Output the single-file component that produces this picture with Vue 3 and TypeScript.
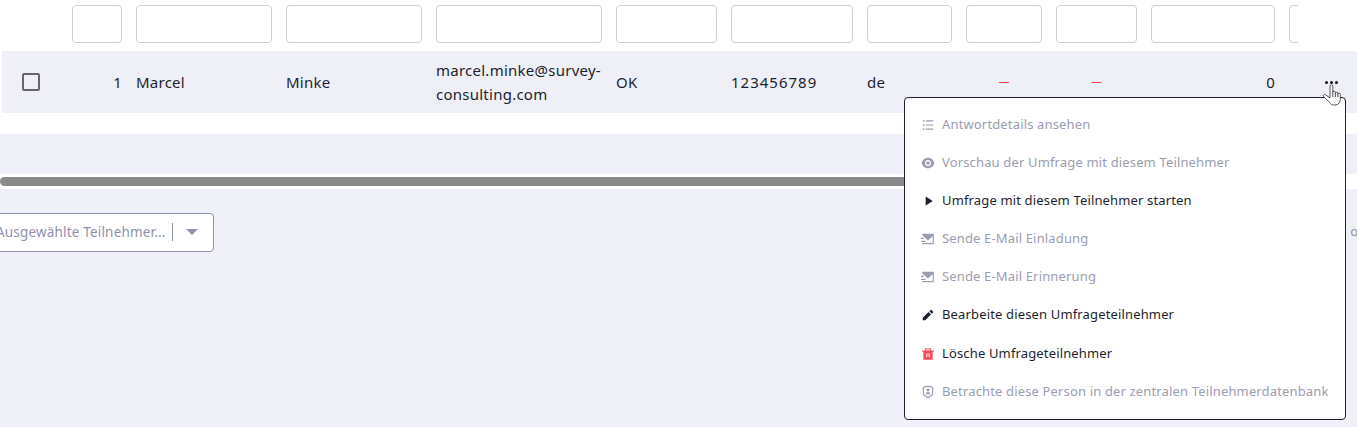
<script setup lang="ts">
interface MenuItem {
  label: string
  path: string
  disabled: boolean
  danger?: boolean
}

const filterCount = 11

const menuItems: MenuItem[] = [
  { label: 'Antwortdetails ansehen', disabled: true, path: 'M8 4h13v2H8V4zM4.5 6.5a1.5 1.5 0 1 1 0-3 1.5 1.5 0 0 1 0 3zm0 7a1.5 1.5 0 1 1 0-3 1.5 1.5 0 0 1 0 3zm0 6.9a1.5 1.5 0 1 1 0-3 1.5 1.5 0 0 1 0 3zM8 11h13v2H8v-2zm0 7h13v2H8v-2z' },
  { label: 'Vorschau der Umfrage mit diesem Teilnehmer', disabled: true, path: 'M1.181 12C2.121 6.88 6.608 3 12 3c5.392 0 9.878 3.88 10.819 9-.94 5.12-5.427 9-10.819 9-5.392 0-9.878-3.88-10.819-9zM12 17a5 5 0 1 0 0-10 5 5 0 0 0 0 10zm0-2a3 3 0 1 1 0-6 3 3 0 0 1 0 6z' },
  { label: 'Umfrage mit diesem Teilnehmer starten', disabled: false, path: 'M19.376 12.416L8.777 19.482A.5.5 0 0 1 8 19.066V4.934a.5.5 0 0 1 .777-.416l10.599 7.066a.5.5 0 0 1 0 .832z' },
  { label: 'Sende E-Mail Einladung', disabled: true, path: 'M2 5.5V3.993A1 1 0 0 1 2.992 3h18.016c.548 0 .992.445.992.993v16.014a1 1 0 0 1-.992.993H2.992A.993.993 0 0 1 2 20.007V19h18V7.3l-8 7.2-10-9zM0 10h5v2H0v-2zm0 5h8v2H0v-2z' },
  { label: 'Sende E-Mail Erinnerung', disabled: true, path: 'M2 5.5V3.993A1 1 0 0 1 2.992 3h18.016c.548 0 .992.445.992.993v16.014a1 1 0 0 1-.992.993H2.992A.993.993 0 0 1 2 20.007V19h18V7.3l-8 7.2-10-9zM0 10h5v2H0v-2zm0 5h8v2H0v-2z' },
  { label: 'Bearbeite diesen Umfrageteilnehmer', disabled: false, path: 'M12.9 6.858l4.242 4.243L7.242 21H3v-4.243l9.9-9.9zm1.414-1.414l2.121-2.122a1 1 0 0 1 1.414 0l2.829 2.829a1 1 0 0 1 0 1.414l-2.122 2.121-4.242-4.242z' },
  { label: 'Lösche Umfrageteilnehmer', disabled: false, danger: true, path: 'M17 6h5v2h-2v13a1 1 0 0 1-1 1H5a1 1 0 0 1-1-1V8H2V6h5V3a1 1 0 0 1 1-1h8a1 1 0 0 1 1 1v3zm-8 5v6h2v-6H9zm4 0v6h2v-6h-2zM9 4v2h6V4H9z' },
  { label: 'Betrachte diese Person in der zentralen Teilnehmerdatenbank', disabled: true, path: 'M3.783 2.826L12 1l8.217 1.826a1 1 0 0 1 .783.976v9.987a6 6 0 0 1-2.672 4.992L12 23l-6.328-4.219A6 6 0 0 1 3 13.79V3.802a1 1 0 0 1 .783-.976zM5 4.604v9.185a4 4 0 0 0 1.781 3.328L12 20.597l5.219-3.48A4 4 0 0 0 19 13.79V4.604L12 3.05 5 4.604zM12 11a2.5 2.5 0 1 1 0-5 2.5 2.5 0 0 1 0 5zm-4.473 5a4.5 4.5 0 0 1 8.946 0H7.527z' },
]
</script>

<template>
  <div class="page">
    <div class="grid filters">
      <span></span>
      <input v-for="n in filterCount - 1" :key="n" class="filter" type="text" />
      <div class="filter-clip"><input class="filter" type="text" /></div>
    </div>

    <div class="grid row">
      <span class="check-cell"><span class="check"></span></span>
      <span class="right">1</span>
      <span>Marcel</span>
      <span>Minke</span>
      <span class="email">marcel.minke@survey-consulting.com</span>
      <span>OK</span>
      <span class="digits">123456789</span>
      <span>de</span>
      <span class="center red">—</span>
      <span class="center red">—</span>
      <span class="right">0</span>
      <span class="dots"><i></i><i></i><i></i></span>
    </div>

    <div class="gap"></div>
    <div class="band"></div>
    <div class="scrollbar"><div class="thumb"></div></div>

    <div class="footer">
      <div class="select">
        <span class="select-text">Ausgewählte Teilnehmer...</span>
        <span class="select-sep"></span>
        <span class="caret"></span>
      </div>
      <span class="clipped">o</span>
    </div>

    <ul class="menu">
      <li v-for="item in menuItems" :key="item.label" :class="{ disabled: item.disabled }">
        <svg class="icon" :class="{ danger: item.danger }" viewBox="0 0 24 24" aria-hidden="true">
          <path :d="item.path" />
        </svg>
        <span class="label">{{ item.label }}</span>
      </li>
    </ul>

    <svg class="cursor" viewBox="0 0 20 24" aria-hidden="true">
      <path d="M7 13V3.2a1.4 1.4 0 0 1 2.8 0V9.5a1.3 1.3 0 0 1 2.6 0v.8a1.3 1.3 0 0 1 2.5 0v.9a1.2 1.2 0 0 1 2.4 .3v5.2c0 3-2.2 5.3-5.3 5.3H11c-2.400 0-3.600-1-4.600-2.800L.5 13.500c-.8-1.500 1-2.800 2.300-1.500L7 15z" fill="#fff" stroke="#333" stroke-width=".8" stroke-linejoin="round" />
      <path d="M9.800 9.500V14M12.400 10V14M14.900 11V14" fill="none" stroke="#222" stroke-width=".8" />
    </svg>
  </div>
</template>

<style>
html, body { margin: 0; background: #fff; }
</style>

<style scoped>
.page {
  position: relative;
  width: 1357px;
  height: 427px;
  overflow: hidden;
  display: flex;
  flex-direction: column;
  background: #fff;
  font-family: "Noto Sans", "Liberation Sans", sans-serif;
  color: #1e1f2e;
}
.grid {
  display: grid;
  grid-template-columns: 58px 50px 136px 136px 166px 101px 122px 85px 76px 81px 124px 68px;
  column-gap: 14px;
  flex: none;
}
.filters {
  height: 38px;
  margin: 5px 0 8px;
}
.filter {
  box-sizing: border-box;
  width: 100%;
  height: 38px;
  margin: 0;
  padding: 0;
  background: #fff;
  border: 1px solid #cfcfcf;
  border-radius: 4px;
}
.filter-clip { width: 9px; overflow: hidden; }
.filter-clip .filter { width: 60px; }
.row {
  height: 62px;
  margin-left: 2px;
  grid-template-columns: 56px 50px 136px 136px 166px 101px 122px 85px 76px 81px 124px 68px;
  align-items: center;
  background: #eeeff7;
  font-size: 15px;
  letter-spacing: 0.25px;
  line-height: 24px;
}
.check-cell { display: flex; padding-left: 20px; }
.check {
  box-sizing: border-box;
  width: 18px;
  height: 18px;
  border: 2px solid #666;
  border-radius: 2px;
}
.right { text-align: right; }
.center { text-align: center; }
.red {
  color: #ff3b4f;
  font-size: 11px;
  line-height: 20px;
  letter-spacing: 0;
  position: relative;
  top: -1px;
}
.digits { letter-spacing: 1px; }
.email { overflow-wrap: anywhere; }
.dots {
  display: flex;
  gap: 2px;
  padding-left: 36px;
}
.dots i {
  width: 3px;
  height: 3px;
  border-radius: 50%;
  background: #111;
}
.gap { height: 21px; flex: none; }
.band { height: 40px; flex: none; background: #eeeff7; }
.scrollbar {
  height: 15px;
  flex: none;
  padding-top: 3px;
  box-sizing: border-box;
  background: #fff;
}
.thumb {
  width: 1000px;
  height: 9px;
  border-radius: 5px;
  background: #8a8a8a;
}
.footer {
  flex: 1;
  background: #eeeff7;
  display: flex;
  justify-content: space-between;
  align-items: flex-start;
  padding-top: 24px;
}
.select {
  box-sizing: border-box;
  width: 224px;
  height: 39px;
  margin-left: -10px;
  padding: 0 0 1px 7px;
  display: flex;
  align-items: center;
  background: #fff;
  border: 1px solid #8f91a8;
  border-radius: 4px;
  color: #8f91a8;
  font-size: 13.5px;
  letter-spacing: 0.18px;
  white-space: nowrap;
}
.select-text { width: 169px; flex: none; margin-left: -2px; }
.select-sep {
  width: 1px;
  height: 18px;
  flex: none;
  margin-left: 7px;
  background: #8f91a8;
}
.caret {
  margin-left: 13px;
  width: 0;
  height: 0;
  border-left: 6px solid transparent;
  border-right: 6px solid transparent;
  border-top: 6px solid #9093a8;
}
.clipped {
  margin-top: 9px;
  margin-right: -1px;
  font-size: 13px;
  color: #8f91a8;
}
.menu {
  position: absolute;
  left: 904px;
  top: 97px;
  box-sizing: border-box;
  width: 442px;
  height: 323px;
  margin: 0;
  padding: 7px 0 0 16px;
  list-style: none;
  background: #fff;
  border: 1px solid #1e1f2e;
  border-radius: 4px;
  font-size: 13px;
  letter-spacing: 0.15px;
}
.menu li {
  height: 38px;
  display: flex;
  align-items: center;
  gap: 7px;
  white-space: nowrap;
}
.menu li:nth-child(7) { margin-top: 1px; }
.menu li.disabled { color: #9b9db1; }
.icon {
  width: 14px;
  height: 14px;
  flex: none;
  fill: currentColor;
  position: relative;
  top: 1px;
}
.icon.danger { fill: #ff4a5e; }
.cursor {
  position: absolute;
  left: 1323px;
  top: 83px;
  width: 20px;
  height: 24px;
}
</style>
